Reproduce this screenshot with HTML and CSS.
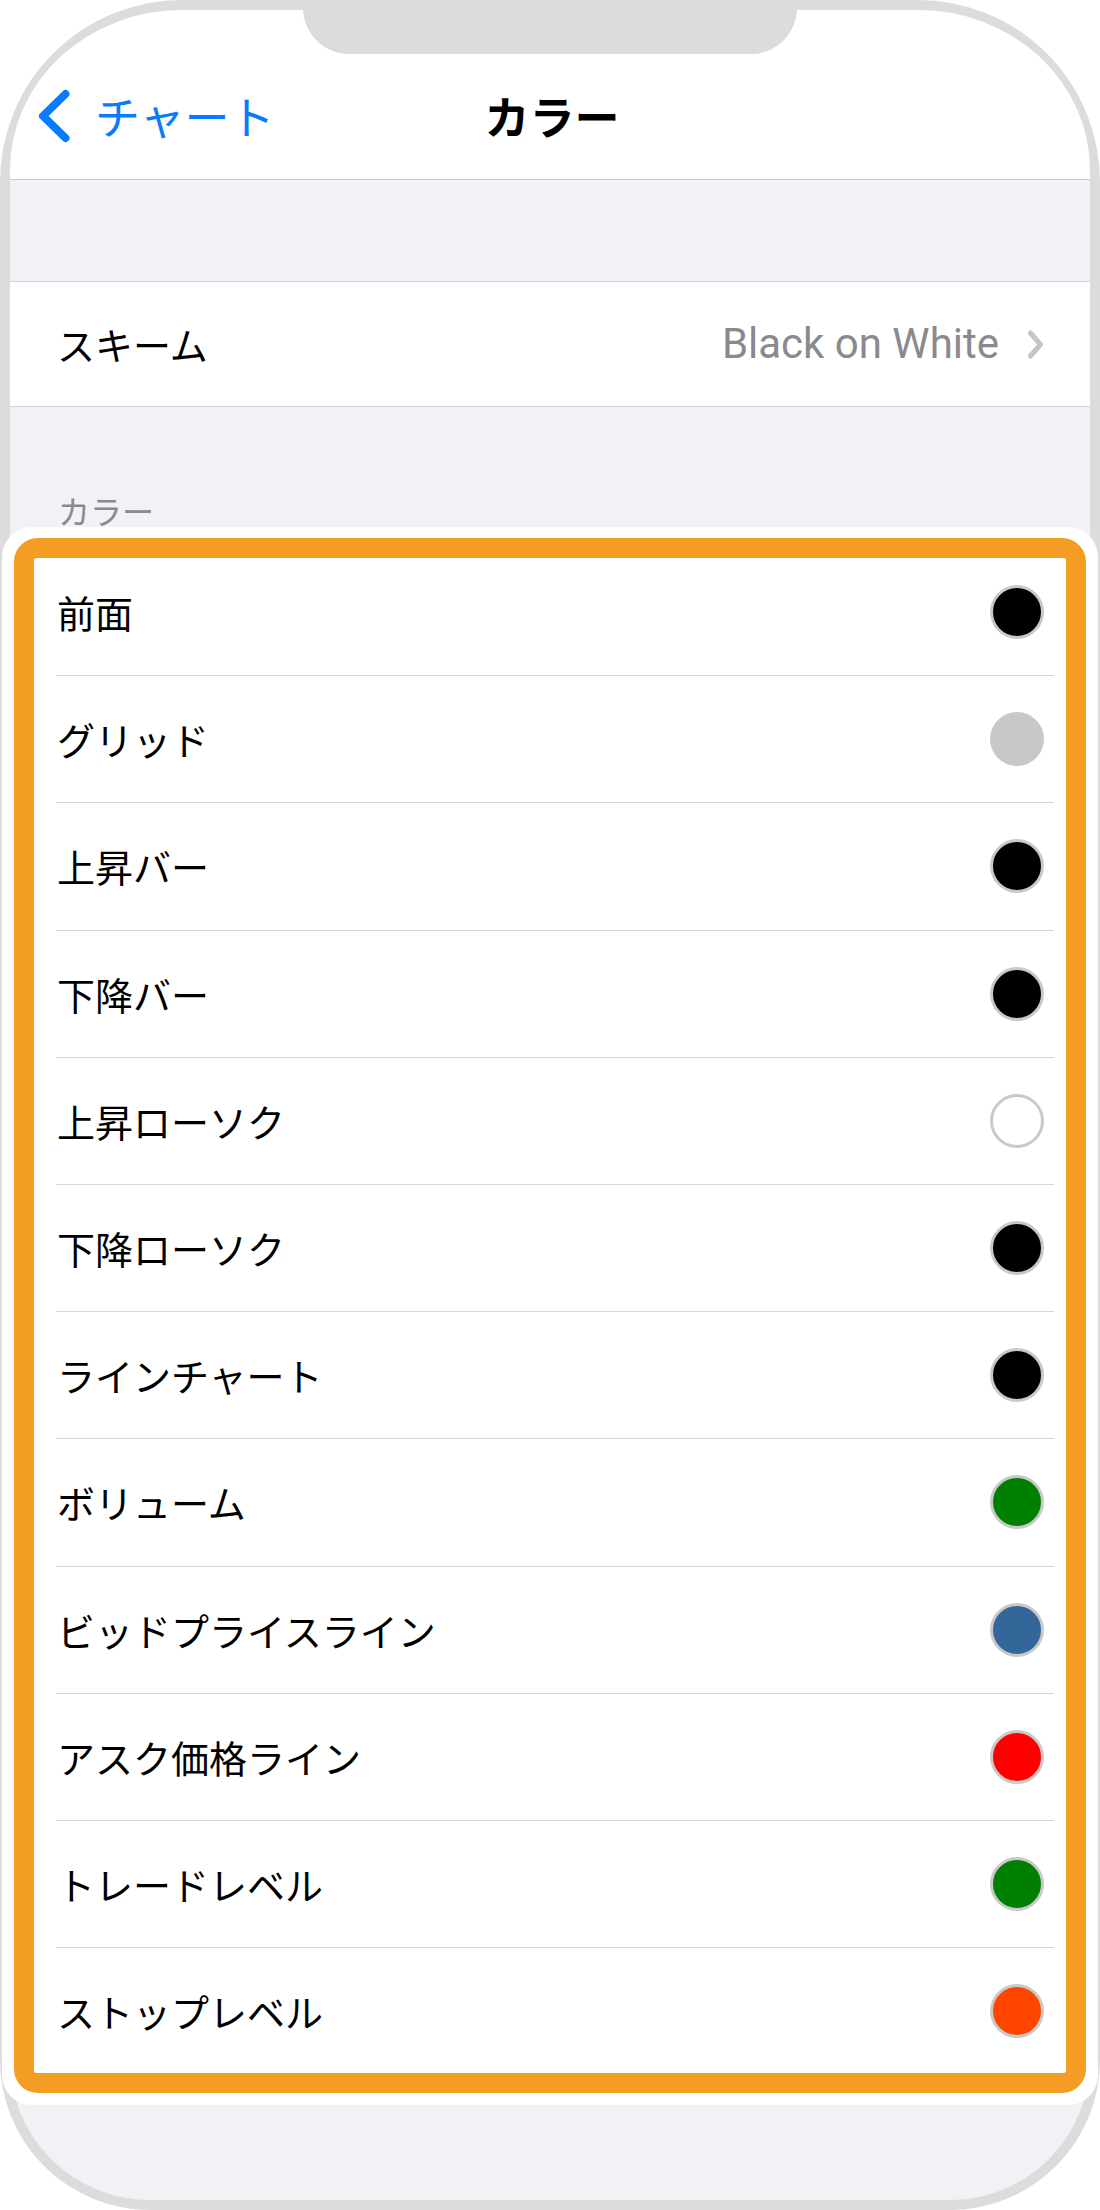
FILE: index.html
```html
<!DOCTYPE html>
<html lang="ja">
<head>
<meta charset="utf-8">
<title>カラー</title>
<link rel="stylesheet" href="styles.css">
</head>
<body>
<div class="phone">
  <div class="notch"></div>
  <header class="nav">
    <div class="status"></div>
    <div class="bar">
      <div class="back">
        <svg class="back-chevron" width="34" height="54" viewBox="0 0 34 54"><path d="M28.5 5 L6 27 L28.5 49" fill="none" stroke="#0a7aff" stroke-width="8" stroke-linecap="round" stroke-linejoin="round"/></svg>
        <span class="back-text">チャート</span>
      </div>
      <div class="title">カラー</div>
      <div class="spacer"></div>
    </div>
  </header>
  <div class="gap-top"></div>
  <div class="group">
    <div class="scheme-row">
      <span class="label">スキーム</span>
      <span class="detail">
        <span class="value">Black on White</span>
        <svg class="chev" width="17" height="29" viewBox="0 0 17 29"><path d="M3.5 3 L13.5 14.5 L3.5 26" fill="none" stroke="#c5c5c9" stroke-width="5" stroke-linecap="round" stroke-linejoin="round"/></svg>
      </span>
    </div>
  </div>
  <div class="section-header">カラー</div>
  <div class="halo">
    <div class="ring">
      <div class="list">
        <div class="rows">
          <div class="row"><span class="label">前面</span><span class="swatch c-black"></span></div>
          <div class="row"><span class="label">グリッド</span><span class="swatch c-grid"></span></div>
          <div class="row"><span class="label">上昇バー</span><span class="swatch c-black"></span></div>
          <div class="row"><span class="label">下降バー</span><span class="swatch c-black"></span></div>
          <div class="row"><span class="label">上昇ローソク</span><span class="swatch c-white"></span></div>
          <div class="row"><span class="label">下降ローソク</span><span class="swatch c-black"></span></div>
          <div class="row"><span class="label">ラインチャート</span><span class="swatch c-black"></span></div>
          <div class="row"><span class="label">ボリューム</span><span class="swatch c-green"></span></div>
          <div class="row"><span class="label">ビッドプライスライン</span><span class="swatch c-blue"></span></div>
          <div class="row"><span class="label">アスク価格ライン</span><span class="swatch c-red"></span></div>
          <div class="row"><span class="label">トレードレベル</span><span class="swatch c-green"></span></div>
          <div class="row"><span class="label">ストップレベル</span><span class="swatch c-orange"></span></div>
        </div>
      </div>
    </div>
  </div>
</div>
</body>
</html>
```
FILE: styles.css
```css
* { box-sizing: border-box; }
html, body { margin: 0; padding: 0; background: #ffffff; }
body {
  font-family: "Noto Sans CJK JP", "Noto Sans", sans-serif;
  color: #000;
}
.phone {
  position: relative;
  width: 1100px;
  height: 2210px;
  border: 10px solid #dcdcdc;
  border-radius: 182px 182px 150px 150px;
  background: #f1f1f6;
}
.notch {
  position: absolute;
  top: -10px;
  left: 293px;
  width: 494px;
  height: 54px;
  background: #dcdcdc;
  border-radius: 0 0 46px 46px;
  z-index: 5;
}
.nav {
  height: 170px;
  background: #fff;
  border-bottom: 1px solid #c8c7cc;
  border-radius: 172px 172px 0 0 / 160px 160px 0 0;
  display: flex;
  flex-direction: column;
}
.status { height: 62px; }
.bar {
  height: 88px;
  display: grid;
  grid-template-columns: 1fr auto 1fr;
  align-items: center;
}
.back {
  display: flex;
  align-items: center;
  padding-left: 27px;
  gap: 24px;
}
.back-chevron { display: block; }
.back-text {
  color: #0a7aff;
  font-size: 45px;
  line-height: 54px;
}
.title {
  font-size: 45px;
  font-weight: 700;
  line-height: 54px;
  padding-left: 4px;
}
.gap-top { height: 101px; }
.group {
  background: #fff;
  border-top: 1px solid #d4d4d8;
  border-bottom: 1px solid #d4d4d8;
}
.scheme-row {
  height: 124px;
  display: flex;
  align-items: center;
  justify-content: space-between;
  padding: 0 46px 0 47px;
}
.label {
  font-size: 38px;
  line-height: 50px;
  color: #000;
}
.detail {
  display: flex;
  align-items: center;
  gap: 28px;
}
.value {
  font-family: Roboto, "Liberation Sans", sans-serif;
  font-size: 42px;
  color: #8a8a8e;
  line-height: 52px;
}
.chev { display: block; }
.section-header {
  height: 120px;
  padding: 86px 0 0 48px;
  font-size: 32px;
  line-height: 34px;
  color: #8a8a8e;
}
.halo {
  margin: 0 -8px;
  background: #fff;
  border-radius: 30px;
  padding: 11px 12px 12px;
}
.ring {
  border: 20px solid #f49d25;
  border-radius: 24px;
}
.list {
  background: #fff;
  height: 1515px;
  overflow: hidden;
  border-radius: 3px;
}
.rows { margin-top: -9px; }
.row {
  height: 127.2px;
  margin: 0 12px 0 22px;
  padding: 0 10px 0 1px;
  border-bottom: 1px solid #d6d6d9;
  display: flex;
  align-items: center;
  justify-content: space-between;
}
.swatch {
  width: 54px;
  height: 54px;
  border-radius: 50%;
  border: 3px solid #c9c9c9;
  flex: none;
}
.c-black { background: #000; }
.c-grid { background: #c8c8c8; border-color: #c8c8c8; }
.c-white { background: #fff; }
.c-green { background: #008000; }
.c-blue { background: #336699; }
.c-red { background: #ff0000; }
.c-orange { background: #ff4500; }
```
